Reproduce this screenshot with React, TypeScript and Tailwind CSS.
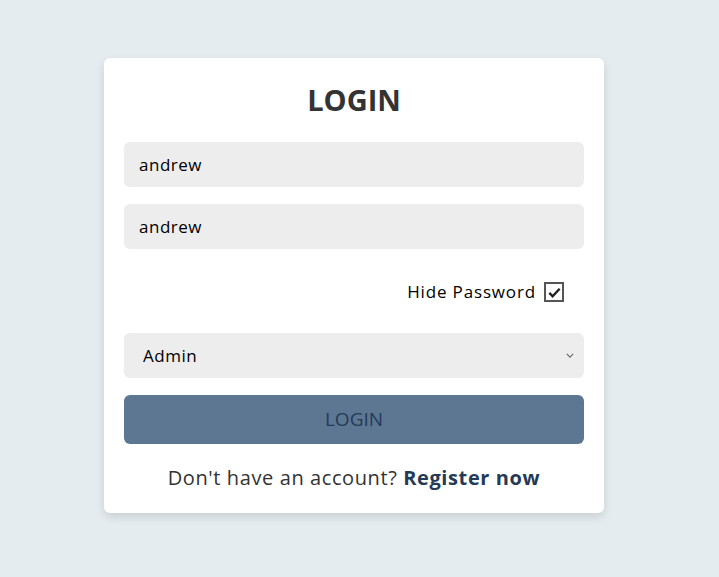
import React, { useState } from 'react'

export default function App() {
  const [hidePassword, setHidePassword] = useState(true)

  return (
    <div
      className="min-h-[577px] w-full bg-[#e5ecef] pt-[58px]"
      style={{ fontFamily: '"Open Sans", "Noto Sans", sans-serif' }}
    >
      <div className="ml-[104px] w-[500px] rounded-md bg-white px-5 pt-[22px] pb-[21px] shadow-[0_4px_10px_rgba(0,0,0,0.12)]">
        <h1 className="text-center text-[29px] font-bold leading-[40px] text-[#333]">LOGIN</h1>

        <form className="mt-[22px] flex flex-col">
          <input
            type="text"
            defaultValue="andrew"
            className="h-[45px] w-full rounded-md bg-[#ededed] px-[15px] text-[17px] tracking-[0.03em] text-black outline-none"
          />
          <input
            type="text"
            defaultValue="andrew"
            className="mt-[17px] h-[45px] w-full rounded-md bg-[#ededed] px-[15px] text-[17px] tracking-[0.03em] text-black outline-none"
          />

          <label className="mt-[32px] flex items-center justify-end gap-2 pr-5 text-[17px] leading-[22px] tracking-[0.05em] text-black">
            Hide Password
            <span
              onClick={() => setHidePassword(!hidePassword)}
              className="flex h-5 w-5 items-center justify-center border-2 border-[#555] bg-white"
            >
              {hidePassword && (
                <svg viewBox="0 0 16 16" className="h-[15px] w-[15px]" fill="none" stroke="#222" strokeWidth="2.6">
                  <path d="M2.5 8.5l3.5 3.5 7.5-8" />
                </svg>
              )}
            </span>
          </label>

          <div className="relative mt-[30px]">
            <select className="h-[45px] w-full appearance-none rounded-md bg-[#ededed] pl-[19px] text-[17px] tracking-[0.03em] text-black outline-none">
              <option>Admin</option>
              <option>User</option>
            </select>
            <svg
              viewBox="0 0 10 6"
              className="pointer-events-none absolute right-[10px] top-[20px] h-[5px] w-[8px]"
              fill="none"
              stroke="#666"
              strokeWidth="1.4"
            >
              <path d="M1 1l4 4 4-4" />
            </svg>
          </div>

          <button
            type="button"
            className="mt-[17px] h-[49px] w-full rounded-md bg-[#5d7691] text-[19px] text-[#253a57]"
          >
            LOGIN
          </button>

          <p className="mt-[20px] text-center text-[20px] leading-[28px] tracking-[0.03em] text-[#333]">
            Don't have an account? <a className="font-bold text-[#253a57]">Register now</a>
          </p>
        </form>
      </div>
    </div>
  )
}
